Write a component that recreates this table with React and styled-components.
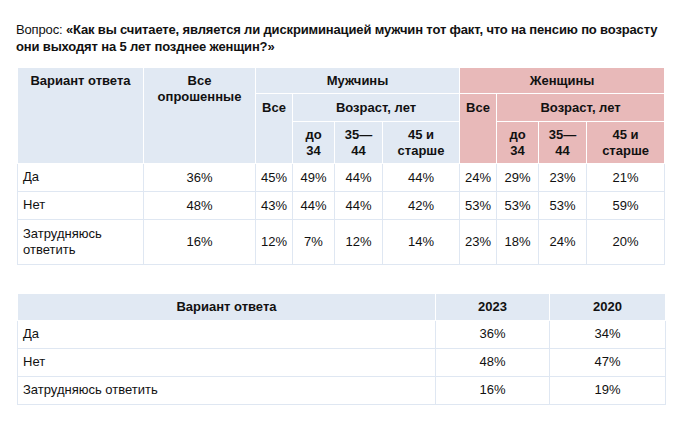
import React from "react";
import styled, { createGlobalStyle } from "styled-components";

const Global = createGlobalStyle`
  html, body { margin: 0; padding: 0; background: #fff; }
  body { font-family: "Liberation Sans", Arial, sans-serif; color: #111; }
`;

const Page = styled.div`
  padding: 21px 10px 0 16px;
  width: 679px;
  box-sizing: border-box;
`;

const Question = styled.p`
  margin: 0 0 12px 0;
  font-size: 13px;
  line-height: 17px;
  white-space: nowrap;
  letter-spacing: -0.15px;
  span { font-weight: normal; }
  b { font-weight: bold; }
`;

const Table = styled.table`
  border-collapse: collapse;
  table-layout: fixed;
  width: 648px;
  margin: 0 0 28px 1px;
  font-size: 13px;
  line-height: 16px;
`;

const HeadCell = styled.th`
  background: ${(p) => (p.$tone === "pink" ? "#e8b9b9" : "#e1e9f3")};
  border: 1px solid #fff;
  font-weight: bold;
  text-align: center;
  vertical-align: top;
  padding: ${(p) => p.$pad || "5px 4px"};
`;

const Cell = styled.td`
  border: 1px solid #dfe7f2;
  text-align: ${(p) => (p.$left ? "left" : "center")};
  vertical-align: middle;
  padding: ${(p) => p.$pad || "5px 4px"};
`;

const widths1 = [126, 112, 37, 42, 48, 77, 37, 42, 48, 78];

const rows1 = [
  { label: "Да", vals: ["36%", "45%", "49%", "44%", "44%", "24%", "29%", "23%", "21%"] },
  { label: "Нет", vals: ["48%", "43%", "44%", "44%", "42%", "53%", "53%", "53%", "59%"] },
  { label: "Затрудняюсь ответить", vals: ["16%", "12%", "7%", "12%", "14%", "23%", "18%", "24%", "20%"], tall: true },
];

const rows2 = [
  ["Да", "36%", "34%"],
  ["Нет", "48%", "47%"],
  ["Затрудняюсь ответить", "16%", "19%"],
];

const AgeHeads = ({ tone }) => (
  <>
    <HeadCell $tone={tone} $pad="5px 2px 4px">до<br />34</HeadCell>
    <HeadCell $tone={tone} $pad="5px 2px 4px">35—<br />44</HeadCell>
    <HeadCell $tone={tone} $pad="5px 2px 4px">45 и<br />старше</HeadCell>
  </>
);

export default function App() {
  return (
    <Page>
      <Global />
      <Question>
        <span>Вопрос: </span>
        <b>«Как вы считаете, является ли дискриминацией мужчин тот факт, что на пенсию по возрасту</b>
        <br />
        <b>они выходят на 5 лет позднее женщин?»</b>
      </Question>

      <Table>
        <colgroup>
          {widths1.map((w, i) => (
            <col key={i} style={{ width: w }} />
          ))}
        </colgroup>
        <thead>
          <tr>
            <HeadCell rowSpan={3} $pad="5px 4px 4px">Вариант ответа</HeadCell>
            <HeadCell rowSpan={3} $pad="5px 4px 4px">Все опрошенные</HeadCell>
            <HeadCell colSpan={4} $pad="5px 4px 4px">Мужчины</HeadCell>
            <HeadCell colSpan={4} $tone="pink" $pad="5px 4px 4px">Женщины</HeadCell>
          </tr>
          <tr>
            <HeadCell rowSpan={2} $pad="6px 2px">Все</HeadCell>
            <HeadCell colSpan={3} $pad="6px 4px 5px">Возраст, лет</HeadCell>
            <HeadCell rowSpan={2} $tone="pink" $pad="6px 2px">Все</HeadCell>
            <HeadCell colSpan={3} $tone="pink" $pad="6px 4px 5px">Возраст, лет</HeadCell>
          </tr>
          <tr>
            <AgeHeads tone="blue" />
            <AgeHeads tone="pink" />
          </tr>
        </thead>
        <tbody>
          {rows1.map((r) => (
            <tr key={r.label}>
              <Cell $left $pad={r.tall ? "6px 5px" : "5px 5px 6px"}>{r.label}</Cell>
              {r.vals.map((v, i) => (
                <Cell key={i} $pad="5px 2px">{v}</Cell>
              ))}
            </tr>
          ))}
        </tbody>
      </Table>

      <Table>
        <colgroup>
          <col style={{ width: 418 }} />
          <col style={{ width: 114 }} />
          <col style={{ width: 116 }} />
        </colgroup>
        <thead>
          <tr>
            <HeadCell $pad="5px 4px">Вариант ответа</HeadCell>
            <HeadCell $pad="5px 4px">2023</HeadCell>
            <HeadCell $pad="5px 4px">2020</HeadCell>
          </tr>
        </thead>
        <tbody>
          {rows2.map((r) => (
            <tr key={r[0]}>
              <Cell $left $pad="5px 5px 6px">{r[0]}</Cell>
              <Cell $pad="5px 4px 6px">{r[1]}</Cell>
              <Cell $pad="5px 4px 6px">{r[2]}</Cell>
            </tr>
          ))}
        </tbody>
      </Table>
    </Page>
  );
}
